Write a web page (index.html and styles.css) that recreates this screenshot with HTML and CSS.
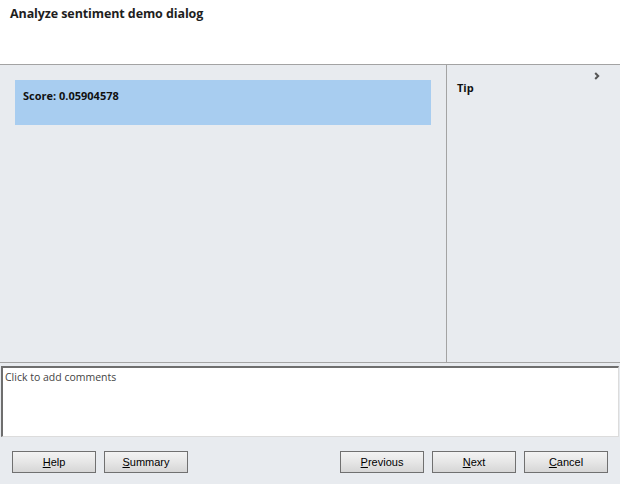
FILE: index.html
```html
<!DOCTYPE html>
<html>
<head>
<meta charset="utf-8">
<link rel="stylesheet" href="styles.css">
</head>
<body>
<div class="dialog">
  <div class="header">
    <h1 class="title">Analyze sentiment demo dialog</h1>
  </div>
  <div class="main">
    <div class="content">
      <div class="score">Score: 0.05904578</div>
    </div>
    <div class="tip-pane">
      <div class="tip-head">
        <span class="tip-label">Tip</span>
        <svg class="chev" width="6" height="8" viewBox="0 0 6 8"><path d="M1.2 1 L4.2 4 L1.2 7" fill="none" stroke="#555555" stroke-width="2"/></svg>
      </div>
    </div>
  </div>
  <div class="comments">Click to add comments</div>
  <div class="footer">
    <div class="group">
      <button class="btn"><u>H</u>elp</button>
      <button class="btn"><u>S</u>ummary</button>
    </div>
    <div class="group">
      <button class="btn"><u>P</u>revious</button>
      <button class="btn"><u>N</u>ext</button>
      <button class="btn"><u>C</u>ancel</button>
    </div>
  </div>
</div>
</body>
</html>
```
FILE: styles.css
```css
html, body {
  margin: 0;
  padding: 0;
  width: 620px;
  height: 484px;
  background: #e8ebef;
  overflow: hidden;
}
.dialog {
  display: flex;
  flex-direction: column;
  width: 620px;
  height: 484px;
  font-family: "Open Sans", "Noto Sans", sans-serif;
}
.header {
  background: #ffffff;
  border-bottom: 1px solid #a3a3a3;
  box-sizing: border-box;
  height: 65px;
  padding: 5px 10px 0;
}
.title {
  margin: 0;
  font-size: 12.5px;
  font-weight: 700;
  color: #1e1e1e;
  letter-spacing: -0.1px;
}
.main {
  display: flex;
  height: 298px;
  box-sizing: border-box;
  border-bottom: 1px solid #a3a3a3;
  background: #e8ebef;
}
.content {
  width: 447px;
  box-sizing: border-box;
  border-right: 1px solid #a3a3a3;
  padding: 15px 15px 0 15px;
}
.score {
  width: 416px;
  height: 45px;
  box-sizing: border-box;
  background: #a8cdf0;
  padding: 8px 8px;
  font-size: 11px;
  font-weight: 700;
  color: #111;
}
.tip-pane {
  flex: 1;
  padding: 6px 0 0 10px;
  box-sizing: border-box;
}
.tip-head {
  display: flex;
  justify-content: space-between;
  align-items: flex-start;
  padding-right: 20px;
}
.tip-label {
  font-size: 11px;
  font-weight: 700;
  color: #111;
  padding-top: 9px;
}
.chev {
  margin-top: 1px;
}
.comments {
  margin: 3px 1px 0 1px;
  height: 71px;
  box-sizing: border-box;
  background: #ffffff;
  border-top: 2px solid #6e6e6e;
  border-left: 2px solid #6e6e6e;
  border-right: 1px solid #dcdcdc;
  border-bottom: 1px solid #dcdcdc;
  padding: 2px 2px;
  font-size: 10.5px;
  color: #444;
}
.footer {
  display: flex;
  justify-content: space-between;
  padding: 14px 12px 0 12px;
}
.group {
  display: flex;
  gap: 8px;
}
.btn {
  width: 84px;
  height: 22px;
  box-sizing: border-box;
  border: 1px solid #707070;
  background: linear-gradient(#f3f3f3, #e6e6e6 50%, #d6d6d6);
  font-family: "Liberation Sans", Arial, sans-serif;
  font-size: 11px;
  color: #000;
  padding: 0;
  margin: 0;
}
.btn u {
  text-decoration: underline;
}
```
